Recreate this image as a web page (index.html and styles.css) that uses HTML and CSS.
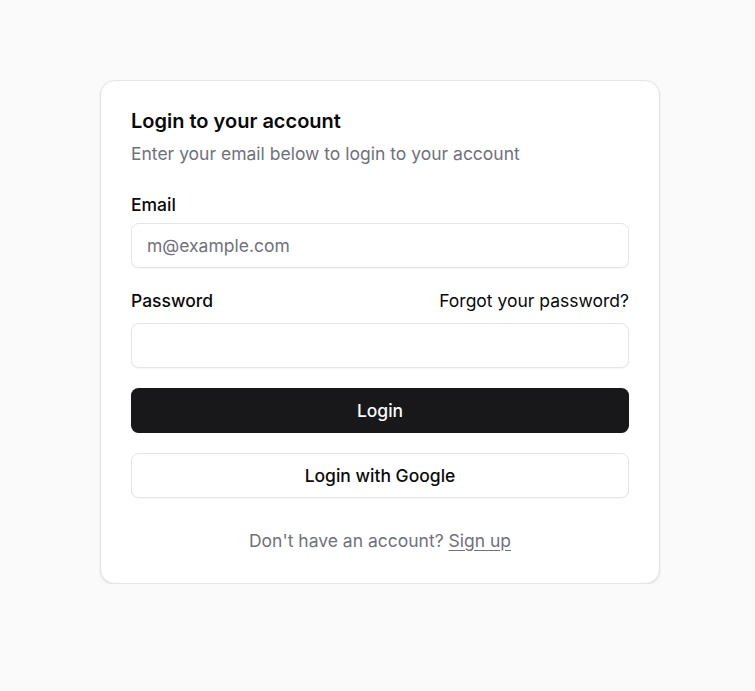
FILE: index.html
```html
<!DOCTYPE html>
<html lang="en">
<head>
<meta charset="utf-8">
<title>Login</title>
<link rel="stylesheet" href="styles.css">
</head>
<body>
<main class="page">
  <div class="card">
    <div class="card-header">
      <h1 class="card-title">Login to your account</h1>
      <p class="card-desc">Enter your email below to login to your account</p>
    </div>
    <form class="form">
      <div class="field">
        <label class="label" for="email">Email</label>
        <input class="input" id="email" type="email" placeholder="m@example.com">
      </div>
      <div class="field">
        <div class="label-row">
          <label class="label" for="password">Password</label>
          <a class="forgot" href="#">Forgot your password?</a>
        </div>
        <input class="input" id="password" type="password">
      </div>
      <button type="button" class="btn btn-primary">Login</button>
      <button type="button" class="btn btn-outline">Login with Google</button>
    </form>
    <p class="footer-text">Don't have an account? <a href="#" class="signup">Sign up</a></p>
  </div>
</main>
</body>
</html>
```
FILE: styles.css
```css
* { box-sizing: border-box; }
html, body { margin: 0; padding: 0; }
body {
  background: #fafafa;
  font-family: Inter, "Noto Sans", sans-serif;
  color: #0a0a0a;
}
.page {
  padding-top: 80px;
  padding-left: 100px;
}
.card {
  width: 560px;
  background: #fff;
  border: 1px solid #e5e5e5;
  border-radius: 15px;
  box-shadow: 0 1px 3px rgba(0,0,0,0.08), 0 1px 2px rgba(0,0,0,0.04);
  padding: 30px 30px 30px;
}
.card-header { display: flex; flex-direction: column; gap: 10px; }
.card-title {
  margin: 0;
  font-size: 20px;
  line-height: 20px;
  font-weight: 600;
}
.card-desc {
  margin: 0;
  font-size: 17.5px;
  line-height: 25px;
  color: #71717a;
}
.form {
  margin-top: 30px;
  display: flex;
  flex-direction: column;
  gap: 20px;
}
.field { display: flex; flex-direction: column; gap: 9px; }
.label {
  font-size: 17.5px;
  line-height: 17.5px;
  font-weight: 500;
}
.label-row {
  display: flex;
  align-items: center;
  justify-content: space-between;
  height: 25px;
  margin-bottom: 1px;
}
.label-row .label { padding-top: 2px; }
.forgot {
  font-size: 17.5px;
  line-height: 25px;
  color: #0a0a0a;
  text-decoration: none;
}
.input {
  height: 45px;
  width: 100%;
  border: 1px solid #e4e4e7;
  border-radius: 7.5px;
  padding: 0 15px;
  font-family: inherit;
  font-size: 17.5px;
  color: #0a0a0a;
  background: #fff;
  box-shadow: 0 1px 2px rgba(0,0,0,0.04);
  outline: none;
}
.input::placeholder { color: #71717a; }
.btn {
  height: 45px;
  width: 100%;
  border-radius: 7.5px;
  font-family: inherit;
  font-size: 17.5px;
  font-weight: 500;
  cursor: pointer;
}
.btn-primary {
  background: #18181b;
  color: #fafafa;
  border: none;
}
.btn-outline {
  background: #fff;
  color: #0a0a0a;
  border: 1px solid #e4e4e7;
  box-shadow: 0 1px 2px rgba(0,0,0,0.04);
}
.footer-text {
  margin: 30px 0 0;
  text-align: center;
  font-size: 17.5px;
  line-height: 25px;
  color: #71717a;
}
.signup {
  color: #71717a;
  text-decoration: underline;
  text-underline-offset: 3px;
}
```
